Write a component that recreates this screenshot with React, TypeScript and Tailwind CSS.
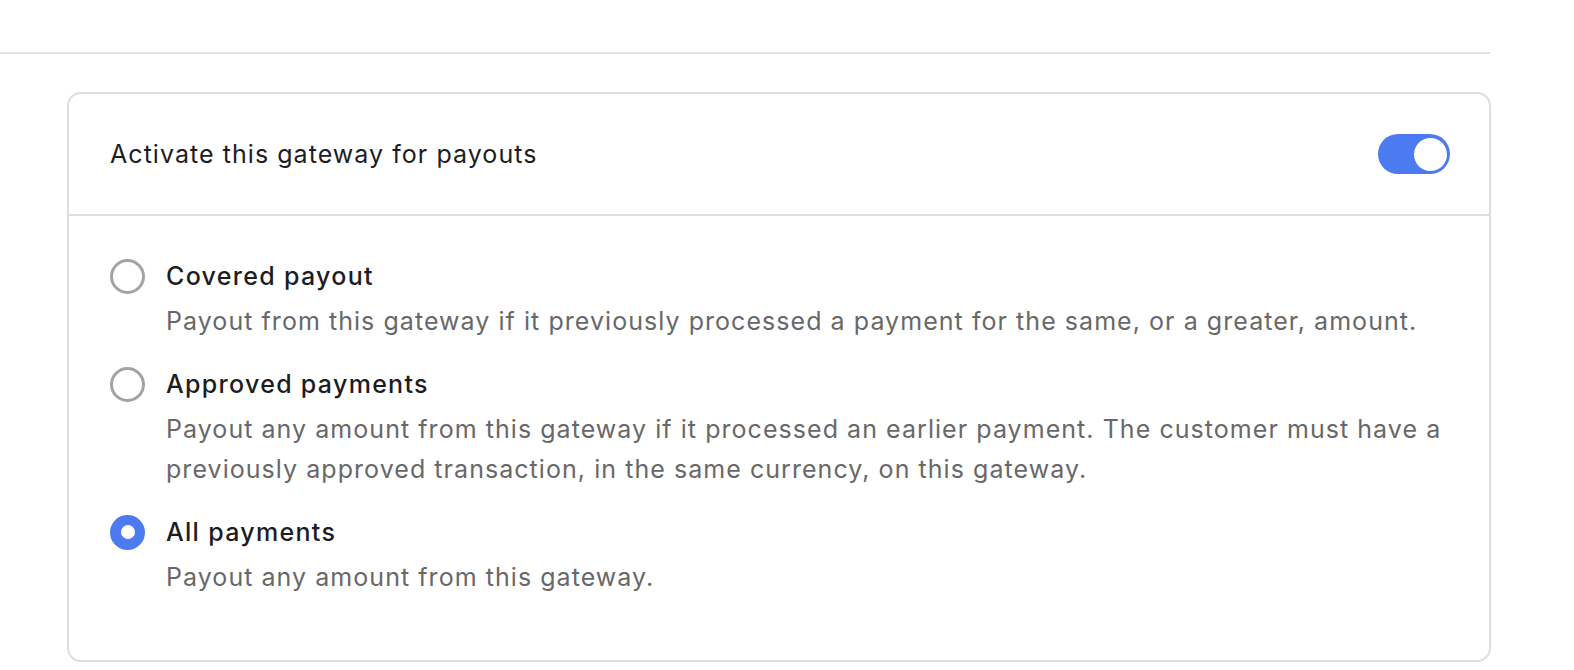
import React, { useState } from 'react';

type Option = {
  id: string;
  title: string;
  description: string;
};

const options: Option[] = [
  {
    id: 'covered',
    title: 'Covered payout',
    description: 'Payout from this gateway if it previously processed a payment for the same, or a greater, amount.',
  },
  {
    id: 'approved',
    title: 'Approved payments',
    description:
      'Payout any amount from this gateway if it processed an earlier payment. The customer must have a previously approved transaction, in the same currency, on this gateway.',
  },
  {
    id: 'all',
    title: 'All payments',
    description: 'Payout any amount from this gateway.',
  },
];

function Radio({ checked }: { checked: boolean }) {
  if (checked) {
    return (
      <span className="flex h-[35px] w-[35px] items-center justify-center rounded-full bg-[#4c7bf1]">
        <span className="h-[14px] w-[14px] rounded-full bg-white" />
      </span>
    );
  }
  return <span className="h-[35px] w-[35px] rounded-full border-[3px] border-[#a3a3a3] bg-white" />;
}

export default function App() {
  const [enabled, setEnabled] = useState(true);
  const [selected, setSelected] = useState('all');

  return (
    <div className="min-h-screen bg-white font-['Inter','Liberation_Sans',sans-serif]">
      <div className="h-[52px]" />
      <div className="h-[2px] w-[1490px] bg-[#e2e2e2]" />

      <div className="ml-[67px] mt-[38px] w-[1424px] rounded-[14px] border-2 border-[#dedede] bg-white">
        {/* header */}
        <div className="flex h-[122px] items-center justify-between border-b-2 border-[#dedede] pl-[41px] pr-[39px]">
          <span className="text-[25px] leading-[40px] tracking-[1.05px] text-[#1d1d1f]">Activate this gateway for payouts</span>
          <button
            onClick={() => setEnabled(!enabled)}
            className={`flex h-[40px] w-[72px] items-center rounded-full p-[3px] ${enabled ? 'justify-end bg-[#4c7bf1]' : 'justify-start bg-[#d4d4d4]'}`}
          >
            <span className="h-[33px] w-[33px] rounded-full bg-white" />
          </button>
        </div>

        {/* options */}
        <div className="flex flex-col gap-[23px] pb-[63px] pl-[41px] pr-[40px] pt-[40px]">
          {options.map((opt) => (
            <div key={opt.id} className="flex cursor-pointer gap-[21px]" onClick={() => setSelected(opt.id)}>
              <div className="flex h-[40px] items-center">
                <Radio checked={selected === opt.id} />
              </div>
              <div className="flex flex-col">
                <span className="text-[25px] font-medium leading-[40px] tracking-[1.3px] text-[#1d1d1f]">{opt.title}</span>
                <span className="mt-[5px] text-[25px] leading-[40px] tracking-[1.05px] text-[#686868]">{opt.description}</span>
              </div>
            </div>
          ))}
        </div>
      </div>
    </div>
  );
}
